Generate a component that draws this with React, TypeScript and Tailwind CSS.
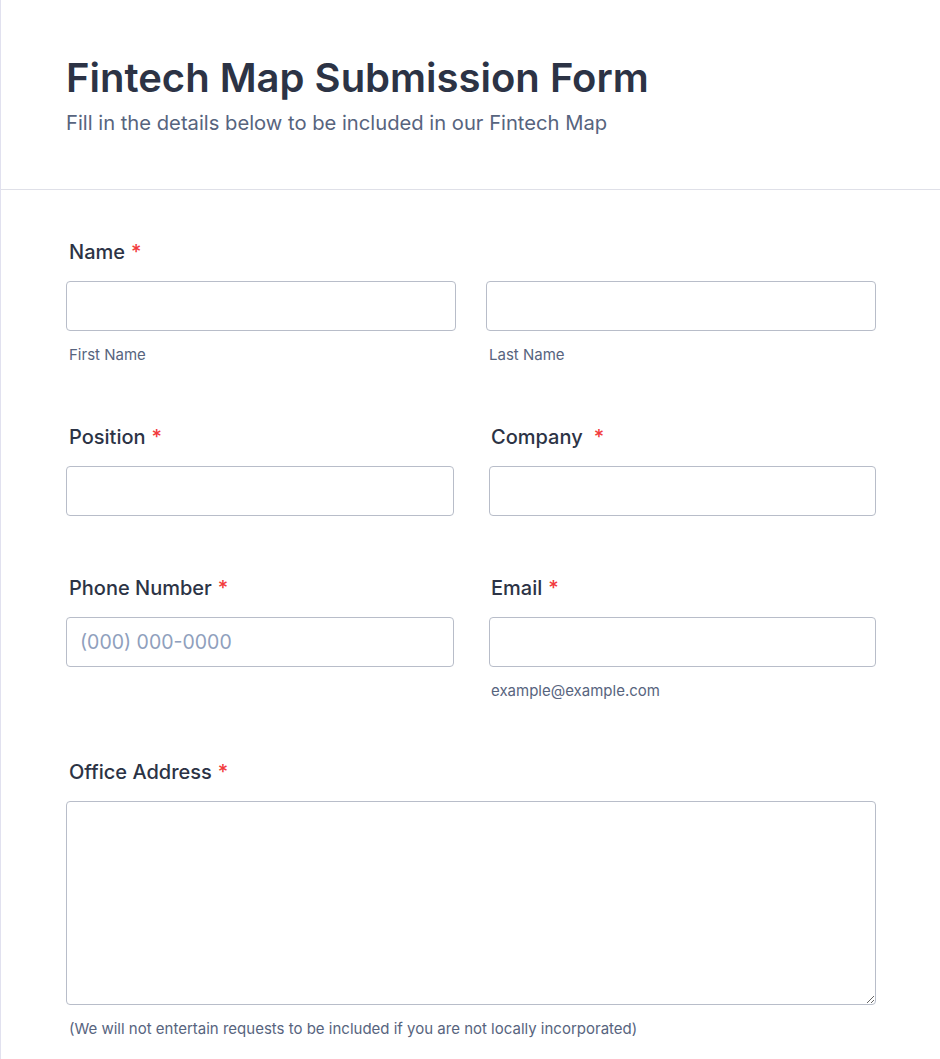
import React from 'react'

const font = { fontFamily: 'Inter, "Noto Sans", sans-serif' }

function Label({ text, wide, right }: { text: string; wide?: boolean; right?: boolean }) {
  return (
    <label className={`block h-6 ${right ? 'pl-[2px]' : 'pl-[3px]'} text-[20px] leading-6 font-medium text-[#2c3345]`}>
      {text}
      <span className={`${wide ? 'ml-[11px]' : 'ml-[6px]'} text-[#f23a3c]`}>*</span>
    </label>
  )
}

function Input({ placeholder }: { placeholder?: string }) {
  return (
    <input
      type="text"
      placeholder={placeholder}
      className="mt-[17px] block h-[50px] w-full rounded-[4px] border border-[#b8bdc9] bg-white px-[13px] text-[19.5px] text-[#2c3345] placeholder:text-[#8f9fbd] outline-none"
    />
  )
}

function Sub({ text, right }: { text: string; right?: boolean }) {
  return (
    <div className={`mt-[13px] ${right ? 'pl-[2px]' : 'pl-[3px]'} text-[15px] leading-[21px] text-[#57647e]`}>{text}</div>
  )
}

export default function App() {
  return (
    <div style={font} className="min-h-screen border-l border-[#e1e1ef] bg-white">
      <header className="border-b border-[#dfe0e8] pl-[65px] pt-[54px] pb-[52px]">
        <h1 className="text-[40px] leading-[48px] font-semibold text-[#2c3345]">Fintech Map Submission Form</h1>
        <p className="mt-[7px] text-[20.2px] leading-7 text-[#57647e]">Fill in the details below to be included in our Fintech Map</p>
      </header>

      <form className="w-[810px] ml-[65px] pt-[50px]">
        <div>
          <Label text="Name" />
          <div className="flex justify-between">
            <div className="w-[390px]">
              <Input />
              <Sub text="First Name" />
            </div>
            <div className="w-[390px]">
              <Input />
              <Sub text="Last Name" />
            </div>
          </div>
        </div>

        <div className="mt-[60px] flex justify-between">
          <div className="w-[388px]">
            <Label text="Position" />
            <Input />
          </div>
          <div className="w-[387px]">
            <Label text="Company" wide right />
            <Input />
          </div>
        </div>

        <div className="mt-[60px] flex justify-between">
          <div className="w-[388px]">
            <Label text="Phone Number" />
            <Input placeholder="(000) 000-0000" />
          </div>
          <div className="w-[387px]">
            <Label text="Email" right />
            <Input />
            <Sub text="example@example.com" right />
          </div>
        </div>

        <div className="mt-[59px]">
          <Label text="Office Address" />
          <textarea className="mt-[17px] block h-[204px] w-full rounded-[4px] border border-[#b8bdc9] bg-white px-3 py-2 text-[16px] outline-none" />
          <div className="mt-[13px] pl-[3px] text-[15px] leading-[21px] text-[#57647e]">
            (We will not entertain requests to be included if you are not locally incorporated)
          </div>
        </div>
      </form>
    </div>
  )
}
